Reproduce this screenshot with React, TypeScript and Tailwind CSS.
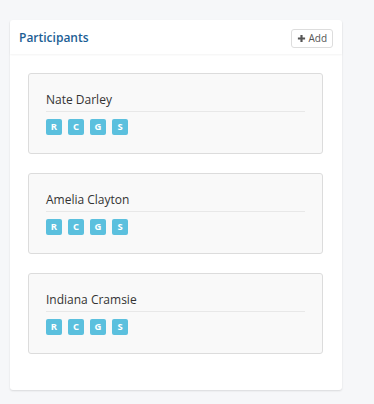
import React from 'react';

const people = ['Nate Darley', 'Amelia Clayton', 'Indiana Cramsie'];
const roles = ['R', 'C', 'G', 'S'];

const ParticipantCard: React.FC<{ name: string }> = ({ name }) => (
  <div className="rounded-[3px] border border-[#dcdcdc] bg-[#f9f9f9] px-[17px] pt-[17px] pb-[18px]">
    <div className="border-b border-[#e8e8e8] pb-[2px] text-[12px] leading-[18px] text-[#333]">{name}</div>
    <div className="mt-[7px] flex gap-[6px]">
      {roles.map((r) => (
        <span
          key={r}
          className="flex h-[16px] w-[16px] items-center justify-center rounded-[2px] bg-[#5bc0de] text-[9.5px] font-bold text-white"
        >
          {r}
        </span>
      ))}
    </div>
  </div>
);

export default function App() {
  return (
    <div className="h-[404px] w-[374px] bg-[#f6f7f9] px-[10px] pt-[20px] font-['Open_Sans',sans-serif]">
      <div className="w-[332px] rounded-[3px] bg-white shadow-[0_1px_2px_rgba(0,0,0,0.12)]">
        <div className="flex h-[34px] items-center justify-between pl-[9px] pr-[9px] pt-[2px] shadow-[0_1px_2px_rgba(0,0,0,0.05)]">
          <span className="text-[12px] font-semibold text-[#1b5e94]">Participants</span>
          <button className="flex h-[19px] items-center gap-[2px] rounded-[3px] border border-[#ddd] bg-white px-[5px] text-[10px] text-[#555]">
            <svg width="9" height="9" viewBox="0 0 10 10">
              <path d="M5 1v8M1 5h8" stroke="#555" strokeWidth="2.4" />
            </svg>
            Add
          </button>
        </div>
        <div className="flex flex-col gap-[19px] pt-[19px] pr-[19px] pb-[36px] pl-[18px]">
          {people.map((p) => (
            <ParticipantCard key={p} name={p} />
          ))}
        </div>
      </div>
    </div>
  );
}
